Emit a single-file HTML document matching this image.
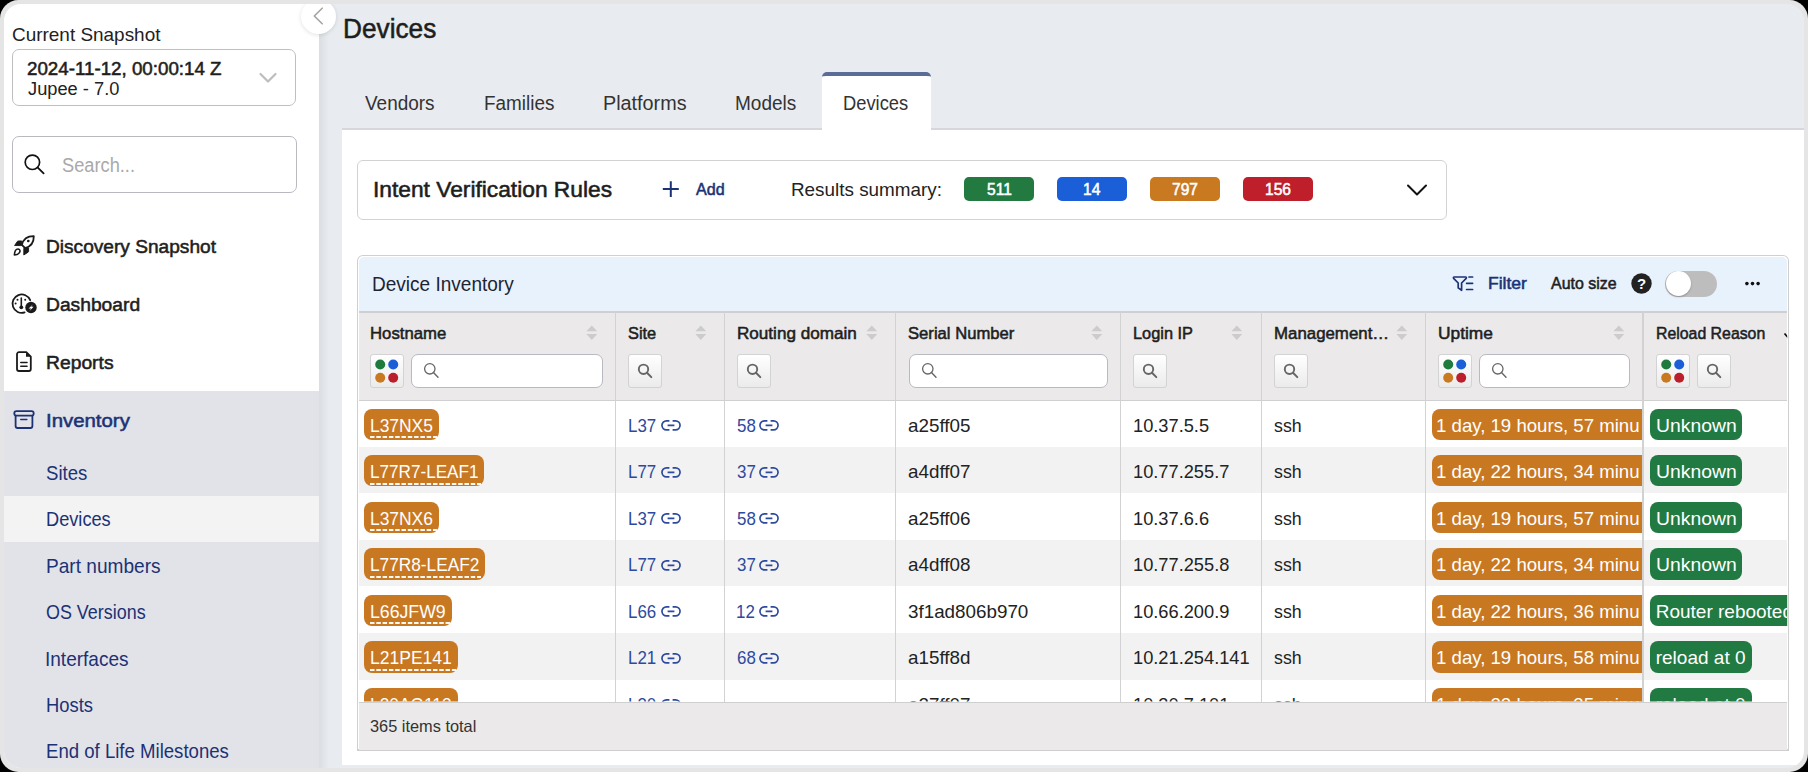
<!DOCTYPE html><html><head><meta charset="utf-8"><style>
html,body{margin:0;padding:0;background:#000;width:1808px;height:772px;overflow:hidden;font-family:"Liberation Sans",sans-serif;}
#frame{position:absolute;left:0;top:0;width:1808px;height:772px;background:#e5e5e5;border-radius:18.5px;}
#content{position:absolute;left:4px;top:4px;width:1800px;height:764px;border-radius:17px;overflow:hidden;background:#e8ecf0;}
#inner{position:absolute;left:-4px;top:-4px;width:1808px;height:772px;}
.t{position:absolute;white-space:nowrap;transform-origin:0 0;}
</style></head><body>
<div id="frame"></div><div id="content"><div id="inner">
<div style="position:absolute;left:0px;top:0px;width:319px;height:772px;background:#fff;"></div>
<div style="position:absolute;left:0px;top:391px;width:319px;height:381px;background:#e2e3e8;"></div>
<div style="position:absolute;left:0px;top:496px;width:319px;height:46px;background:#f3f3f3;"></div>
<div style="position:absolute;left:319px;top:0px;width:10px;height:772px;background:linear-gradient(to right,rgba(0,0,0,0.06),rgba(0,0,0,0));"></div>
<div style="position:absolute;left:301px;top:-1px;width:35px;height:35px;border-radius:50%;background:#fff;box-shadow:0 1px 4px rgba(0,0,0,0.12);"></div>
<svg style="position:absolute;left:301px;top:-1px;" width="35" height="35" viewBox="0 0 35 35"><path d="M21.2,9.2 L13.3,17 L21.2,24.8" fill="none" stroke="#a3a3a3" stroke-width="1.6" stroke-linecap="round" stroke-linejoin="round"/></svg>
<div class="t" style="left:11.65px;top:25.0px;font-size:19.04px;line-height:19.04px;font-weight:normal;color:#222;transform:scaleX(0.9950);">Current Snapshot</div>
<div style="position:absolute;left:11.5px;top:49px;width:284px;height:57px;box-sizing:border-box;border:1.5px solid #bfbfbf;border-radius:7px;background:#fff;"></div>
<div class="t" style="left:27.34px;top:59.0px;font-size:19.04px;line-height:19.04px;font-weight:normal;-webkit-text-stroke:0.55px #1e1e1e;color:#1e1e1e;transform:scaleX(0.9851);">2024-11-12, 00:00:14 Z</div>
<div class="t" style="left:27.54px;top:79.0px;font-size:19.19px;line-height:19.19px;font-weight:normal;color:#222;transform:scaleX(0.9516);">Jupee - 7.0</div>
<svg style="position:absolute;left:256px;top:70px;" width="24" height="16" viewBox="0 0 24 16"><path d="M4.5,4 L12,11.5 L19.5,4" fill="none" stroke="#bdbdbd" stroke-width="2.2" stroke-linecap="round" stroke-linejoin="round"/></svg>
<div style="position:absolute;left:11.5px;top:136px;width:285px;height:57px;box-sizing:border-box;border:1.5px solid #b9b9c2;border-radius:7px;background:#fff;"></div>
<svg style="position:absolute;left:16px;top:148px;" width="36" height="32" viewBox="0 0 36 32"><circle cx="16.4" cy="14.3" r="7.2" fill="none" stroke="#111" stroke-width="1.7"/><path d="M21.8,19.7 L27.6,25.4" stroke="#111" stroke-width="1.8" stroke-linecap="round"/></svg>
<div class="t" style="left:62.39px;top:156.0px;font-size:19.77px;line-height:19.77px;font-weight:normal;color:#a9a9a9;transform:scaleX(0.9224);">Search...</div>
<svg style="position:absolute;left:8px;top:230px;" width="32" height="32" viewBox="0 0 32 32"><path d="M25.8,6.2 C19.6,6.1 15.2,9.6 13.9,14.9 L17,18 C22.4,16.7 25.9,12.4 25.8,6.2 Z" fill="none" stroke="#1a1a1a" stroke-width="1.8" stroke-linejoin="round"/>
<circle cx="20.3" cy="11" r="1.35" fill="#1a1a1a"/>
<path d="M6.6,15.5 L9.3,11.5 Q9.6,11 10.3,11 L13.6,10.9 L13.4,15.6 Z" fill="#1a1a1a" stroke="#1a1a1a" stroke-width="0.9" stroke-linejoin="round"/>
<path d="M15.8,18.3 L20.6,17.7 L20.6,21.2 Q20.6,21.8 20.1,22.2 L15.8,25 Z" fill="#1a1a1a" stroke="#1a1a1a" stroke-width="0.9" stroke-linejoin="round"/>
<path d="M6.4,25 C6.6,21.4 8,19 10,19 C11.9,19 12.6,21 11.5,22.6 C10.5,24.2 8.6,24.9 6.4,25 Z" fill="none" stroke="#1a1a1a" stroke-width="1.6" stroke-linejoin="round"/></svg>
<svg style="position:absolute;left:8px;top:288px;" width="32" height="32" viewBox="0 0 32 32"><path d="M22.2,12.2 A9.2,9.2 0 1 0 16.6,24.4" fill="none" stroke="#1a1a1a" stroke-width="1.8" stroke-linecap="round"/>
<path d="M13.3,10 L13.3,18.5" stroke="#1a1a1a" stroke-width="1.6" stroke-linecap="round"/>
<circle cx="13.3" cy="19.3" r="1.9" fill="#1a1a1a"/>
<circle cx="9.5" cy="11.8" r="1" fill="#1a1a1a"/><circle cx="17.2" cy="11.8" r="1" fill="#1a1a1a"/><circle cx="7.6" cy="15.6" r="1" fill="#1a1a1a"/>
<circle cx="23" cy="19.5" r="5.7" fill="#1a1a1a"/>
<path d="M25,16.2 L20.6,20.4 L23.1,20.4 L21.3,23.2 L25.6,18.7 L23.2,18.7 Z" fill="#fff"/></svg>
<svg style="position:absolute;left:8px;top:346px;" width="32" height="32" viewBox="0 0 32 32"><path d="M11,6.2 H18.3 L22.8,10.7 V23 a2,2 0 0 1 -2,2 H11 a2,2 0 0 1 -2,-2 V8.2 a2,2 0 0 1 2,-2 Z" fill="none" stroke="#1a1a1a" stroke-width="1.8" stroke-linejoin="round"/>
<path d="M18,6.5 L18,10.8 L22.5,10.8 Z" fill="#1a1a1a"/>
<path d="M12.8,16.5 H19 M12.8,20.3 H19" stroke="#1a1a1a" stroke-width="1.6" stroke-linecap="round"/></svg>
<svg style="position:absolute;left:8px;top:404px;" width="32" height="32" viewBox="0 0 32 32"><rect x="6.3" y="7.2" width="19.4" height="4.4" rx="2.2" fill="none" stroke="#1b3275" stroke-width="1.8"/>
<path d="M7.6,11.6 V22 a2,2 0 0 0 2,2 H22.4 a2,2 0 0 0 2,-2 V11.6" fill="none" stroke="#1b3275" stroke-width="1.8"/>
<path d="M12.8,15.5 H18.8" stroke="#1b3275" stroke-width="1.6" stroke-linecap="round"/></svg>
<div class="t" style="left:45.64px;top:237.0px;font-size:19.19px;line-height:19.19px;font-weight:normal;-webkit-text-stroke:0.55px #1e1e1e;color:#1e1e1e;transform:scaleX(0.9961);">Discovery Snapshot</div>
<div class="t" style="left:45.63px;top:295.0px;font-size:19.19px;line-height:19.19px;font-weight:normal;-webkit-text-stroke:0.55px #1e1e1e;color:#1e1e1e;transform:scaleX(1.0025);">Dashboard</div>
<div class="t" style="left:45.63px;top:353.0px;font-size:19.19px;line-height:19.19px;font-weight:normal;-webkit-text-stroke:0.55px #1e1e1e;color:#1e1e1e;transform:scaleX(1.0054);">Reports</div>
<div class="t" style="left:45.54px;top:411.0px;font-size:19.19px;line-height:19.19px;font-weight:normal;-webkit-text-stroke:0.55px #1b3275;color:#1b3275;transform:scaleX(1.0621);">Inventory</div>
<div class="t" style="left:46.26px;top:464.0px;font-size:19.48px;line-height:19.48px;font-weight:normal;color:#1b3275;transform:scaleX(0.9530);">Sites</div>
<div class="t" style="left:46.27px;top:510.0px;font-size:19.48px;line-height:19.48px;font-weight:normal;color:#1b3275;transform:scaleX(0.9342);">Devices</div>
<div class="t" style="left:46.22px;top:557.0px;font-size:19.48px;line-height:19.48px;font-weight:normal;color:#1b3275;transform:scaleX(0.9803);">Part numbers</div>
<div class="t" style="left:46.33px;top:603.0px;font-size:19.48px;line-height:19.48px;font-weight:normal;color:#1b3275;transform:scaleX(0.9203);">OS Versions</div>
<div class="t" style="left:45.48px;top:650.0px;font-size:19.48px;line-height:19.48px;font-weight:normal;color:#1b3275;transform:scaleX(0.9776);">Interfaces</div>
<div class="t" style="left:46.26px;top:696.0px;font-size:19.48px;line-height:19.48px;font-weight:normal;color:#1b3275;transform:scaleX(0.9445);">Hosts</div>
<div class="t" style="left:46.25px;top:742.0px;font-size:19.48px;line-height:19.48px;font-weight:normal;color:#1b3275;transform:scaleX(0.9546);">End of Life Milestones</div>
<div class="t" style="left:343.31px;top:15.0px;font-size:27.18px;line-height:27.18px;font-weight:normal;-webkit-text-stroke:0.55px #1e1e1e;color:#1e1e1e;transform:scaleX(0.9652);">Devices</div>
<div style="position:absolute;left:822.3px;top:71.6px;width:108.4px;height:58px;background:#fff;border-radius:5px 5px 0 0;border-top:4px solid #5b6c96;box-sizing:border-box;"></div>
<div class="t" style="left:365.05px;top:94.0px;font-size:19.91px;line-height:19.91px;font-weight:normal;color:#333;transform:scaleX(0.9529);">Vendors</div>
<div class="t" style="left:483.93px;top:94.0px;font-size:19.91px;line-height:19.91px;font-weight:normal;color:#333;transform:scaleX(0.9492);">Families</div>
<div class="t" style="left:602.76px;top:94.0px;font-size:19.91px;line-height:19.91px;font-weight:normal;color:#333;transform:scaleX(0.9940);">Platforms</div>
<div class="t" style="left:735.02px;top:94.0px;font-size:19.91px;line-height:19.91px;font-weight:normal;color:#333;transform:scaleX(0.9555);">Models</div>
<div class="t" style="left:843.48px;top:94.0px;font-size:19.91px;line-height:19.91px;font-weight:normal;color:#333;transform:scaleX(0.9210);">Devices</div>
<div style="position:absolute;left:342px;top:128px;width:1466px;height:637px;background:#fff;border-top:2px solid #d5d7db;box-sizing:border-box;"></div>
<div style="position:absolute;left:822.3px;top:126px;width:108.4px;height:4px;background:#fff;"></div>
<div style="position:absolute;left:357px;top:159.5px;width:1090px;height:60px;box-sizing:border-box;border:1.5px solid #d2d2d2;border-radius:6px;background:#fff;"></div>
<div class="t" style="left:373.11px;top:179.0px;font-size:21.8px;line-height:21.8px;font-weight:normal;-webkit-text-stroke:0.55px #1e1e1e;color:#1e1e1e;transform:scaleX(1.0438);">Intent Verification Rules</div>
<svg style="position:absolute;left:660px;top:179px;" width="20" height="20" viewBox="0 0 20 20"><path d="M10.8,2.2 V18 M2.8,10.1 H18.8" stroke="#1b3275" stroke-width="2" /></svg>
<div class="t" style="left:695.66px;top:181.0px;font-size:16.42px;line-height:16.42px;font-weight:normal;-webkit-text-stroke:0.55px #1b3275;color:#1b3275;transform:scaleX(0.9788);">Add</div>
<div class="t" style="left:791.01px;top:180.0px;font-size:19.04px;line-height:19.04px;font-weight:normal;color:#222;transform:scaleX(0.9912);">Results summary:</div>
<div style="position:absolute;left:964.4px;top:177.4px;width:70px;height:23.6px;background:#227a40;border-radius:5px;"></div>
<div class="t" style="left:986.98px;top:181.0px;font-size:16.4px;line-height:16.4px;font-weight:normal;-webkit-text-stroke:0.55px #fff;color:#fff;transform:scaleX(0.9500);">511</div>
<div style="position:absolute;left:1057.4px;top:177.4px;width:70px;height:23.6px;background:#1a5fd8;border-radius:5px;"></div>
<div class="t" style="left:1083.39px;top:181.0px;font-size:16.4px;line-height:16.4px;font-weight:normal;-webkit-text-stroke:0.55px #fff;color:#fff;transform:scaleX(0.9500);">14</div>
<div style="position:absolute;left:1150.4px;top:177.4px;width:70px;height:23.6px;background:#c97920;border-radius:5px;"></div>
<div class="t" style="left:1172.20px;top:181.0px;font-size:16.4px;line-height:16.4px;font-weight:normal;-webkit-text-stroke:0.55px #fff;color:#fff;transform:scaleX(0.9500);">797</div>
<div style="position:absolute;left:1243.4px;top:177.4px;width:70px;height:23.6px;background:#be1f2b;border-radius:5px;"></div>
<div class="t" style="left:1265.11px;top:181.0px;font-size:16.4px;line-height:16.4px;font-weight:normal;-webkit-text-stroke:0.55px #fff;color:#fff;transform:scaleX(0.9500);">156</div>
<svg style="position:absolute;left:1404px;top:181px;" width="26" height="18" viewBox="0 0 26 18"><path d="M4,4.5 L13,13.5 L22,4.5" fill="none" stroke="#111" stroke-width="2" stroke-linecap="round" stroke-linejoin="round"/></svg>
<div style="position:absolute;left:357px;top:255px;width:1431.5px;height:496px;box-sizing:border-box;border:1.5px solid #cfcfcf;border-bottom-width:2px;border-radius:6px 6px 0 0;background:#fff;"></div>
<div style="position:absolute;left:358.5px;top:256.5px;width:1428.5px;height:55px;background:#e8f2fd;border-radius:5px 5px 0 0;"></div>
<div class="t" style="left:372.22px;top:275.0px;font-size:19.91px;line-height:19.91px;font-weight:normal;color:#1c2533;transform:scaleX(0.9556);">Device Inventory</div>
<svg style="position:absolute;left:1448px;top:268px;" width="32" height="32" viewBox="0 0 32 32"><path d="M6.2,9 H17.6 a0.8,0.8 0 0 1 0.6,1.3 L13.6,15 V22.3 L10.2,19.9 V15 L5.6,10.3 a0.8,0.8 0 0 1 0.6,-1.3 Z" fill="none" stroke="#1b3275" stroke-width="1.7" stroke-linejoin="round"/>
<path d="M21,9 H24.6 M18.6,15.3 H24.6 M18.6,21.5 H24.6" stroke="#1b3275" stroke-width="1.7" stroke-linecap="round"/></svg>
<div class="t" style="left:1487.74px;top:276.0px;font-size:16.86px;line-height:16.86px;font-weight:normal;-webkit-text-stroke:0.55px #1b3275;color:#1b3275;transform:scaleX(1.0394);">Filter</div>
<div class="t" style="left:1550.86px;top:276.0px;font-size:16.86px;line-height:16.86px;font-weight:normal;-webkit-text-stroke:0.55px #1e1e1e;color:#1e1e1e;transform:scaleX(0.9464);">Auto size</div>
<svg style="position:absolute;left:1631px;top:273px;" width="21" height="21" viewBox="0 0 21 21"><circle cx="10.5" cy="10.5" r="10.2" fill="#222"/><text x="10.5" y="16.2" text-anchor="middle" font-family="Liberation Sans" font-weight="bold" font-size="15" fill="#fff">?</text></svg>
<div style="position:absolute;left:1665.2px;top:270.5px;width:52.3px;height:26px;background:#bdbdbd;border-radius:13px;"></div>
<div style="position:absolute;left:1665.5px;top:271px;width:25px;height:25px;border-radius:50%;background:#fff;box-shadow:0 1px 2px rgba(0,0,0,0.25);"></div>
<svg style="position:absolute;left:1743px;top:279px;" width="20" height="9" viewBox="0 0 20 9"><circle cx="3.9" cy="4.6" r="1.8" fill="#111"/><circle cx="9.5" cy="4.6" r="1.8" fill="#111"/><circle cx="15.1" cy="4.6" r="1.8" fill="#111"/></svg>
<div style="position:absolute;left:358.5px;top:311px;width:1428.5px;height:89.8px;background:#ebe9ea;border-top:2px solid #cfcfcf;border-bottom:1.5px solid #cfcfcf;box-sizing:border-box;"></div>
<div style="position:absolute;left:358.5px;top:446.85px;width:1428.5px;height:46.55px;background:#f2f2f2;"></div>
<div style="position:absolute;left:358.5px;top:539.95px;width:1428.5px;height:46.55px;background:#f2f2f2;"></div>
<div style="position:absolute;left:358.5px;top:633.05px;width:1428.5px;height:46.55px;background:#f2f2f2;"></div>
<div style="position:absolute;left:358.5px;top:701.5px;width:1428.5px;height:48.5px;background:#ebe9ea;border-top:1.5px solid #cfcfcf;box-sizing:border-box;"></div>
<div class="t" style="left:369.94px;top:719.0px;font-size:16.72px;line-height:16.72px;font-weight:normal;color:#333;transform:scaleX(0.9790);">365 items total</div>
<div style="position:absolute;left:614.65px;top:311px;width:1.5px;height:390.5px;background:#d2d2d2;"></div>
<div style="position:absolute;left:723.75px;top:311px;width:1.5px;height:390.5px;background:#d2d2d2;"></div>
<div style="position:absolute;left:894.95px;top:311px;width:1.5px;height:390.5px;background:#d2d2d2;"></div>
<div style="position:absolute;left:1119.85px;top:311px;width:1.5px;height:390.5px;background:#d2d2d2;"></div>
<div style="position:absolute;left:1260.65px;top:311px;width:1.5px;height:390.5px;background:#d2d2d2;"></div>
<div style="position:absolute;left:1424.65px;top:311px;width:1.5px;height:390.5px;background:#d2d2d2;"></div>
<div style="position:absolute;left:1642.25px;top:311px;width:1.5px;height:390.5px;background:#d2d2d2;"></div>
<div class="t" style="left:369.99px;top:325.0px;font-size:17.01px;line-height:17.01px;font-weight:normal;-webkit-text-stroke:0.55px #1e1e1e;color:#1e1e1e;transform:scaleX(0.9838);">Hostname</div>
<svg style="position:absolute;left:585.9px;top:325px;" width="12" height="16" viewBox="0 0 12 16"><path d="M0.4,6.3 L5.8,0.4 L11.2,6.3 Z M0.4,9 L11.2,9 L5.8,15 Z" fill="#cccccc"/></svg>
<div style="position:absolute;left:370.3px;top:353.5px;width:34px;height:34px;box-sizing:border-box;border:1px solid #d3d3d3;border-radius:3px;background:linear-gradient(#ffffff,#ebebeb);"></div>
<svg style="position:absolute;left:370.3px;top:353.5px;" width="34" height="34" viewBox="0 0 34 34"><circle cx="10.2" cy="10.5" r="5" fill="#1f7a3e"/><circle cx="23.2" cy="10.5" r="5" fill="#1a5fd8"/><circle cx="10.2" cy="23.7" r="5" fill="#c97a20"/><circle cx="23.2" cy="23.7" r="5" fill="#bd1e2c"/></svg>
<div style="position:absolute;left:410.5px;top:354px;width:192px;height:33.5px;box-sizing:border-box;border:1.5px solid #b9b9c2;border-radius:7px;background:#fff;"></div>
<svg style="position:absolute;left:410.5px;top:354px;" width="30" height="34" viewBox="0 0 30 34"><circle cx="18.8" cy="14.8" r="5.2" fill="none" stroke="#666" stroke-width="1.3"/><path d="M22.5,18.6 L27,23.2" stroke="#666" stroke-width="1.4" stroke-linecap="round"/></svg>
<div class="t" style="left:628.35px;top:325.0px;font-size:17.01px;line-height:17.01px;font-weight:normal;-webkit-text-stroke:0.55px #1e1e1e;color:#1e1e1e;transform:scaleX(0.9633);">Site</div>
<svg style="position:absolute;left:694.8px;top:325px;" width="12" height="16" viewBox="0 0 12 16"><path d="M0.4,6.3 L5.8,0.4 L11.2,6.3 Z M0.4,9 L11.2,9 L5.8,15 Z" fill="#cccccc"/></svg>
<div style="position:absolute;left:628.4px;top:353.5px;width:34px;height:34px;box-sizing:border-box;border:1px solid #d3d3d3;border-radius:3px;background:linear-gradient(#ffffff,#ebebeb);"></div>
<svg style="position:absolute;left:628.4px;top:353.5px;" width="34" height="34" viewBox="0 0 34 34"><circle cx="15.5" cy="15.3" r="4.7" fill="none" stroke="#666" stroke-width="1.9"/><path d="M19,18.8 L23.3,23.1" stroke="#666" stroke-width="2" stroke-linecap="round"/></svg>
<div class="t" style="left:737.07px;top:325.0px;font-size:17.01px;line-height:17.01px;font-weight:normal;-webkit-text-stroke:0.55px #1e1e1e;color:#1e1e1e;transform:scaleX(1.0055);">Routing domain</div>
<svg style="position:absolute;left:865.8px;top:325px;" width="12" height="16" viewBox="0 0 12 16"><path d="M0.4,6.3 L5.8,0.4 L11.2,6.3 Z M0.4,9 L11.2,9 L5.8,15 Z" fill="#cccccc"/></svg>
<div style="position:absolute;left:737.2px;top:353.5px;width:34px;height:34px;box-sizing:border-box;border:1px solid #d3d3d3;border-radius:3px;background:linear-gradient(#ffffff,#ebebeb);"></div>
<svg style="position:absolute;left:737.2px;top:353.5px;" width="34" height="34" viewBox="0 0 34 34"><circle cx="15.5" cy="15.3" r="4.7" fill="none" stroke="#666" stroke-width="1.9"/><path d="M19,18.8 L23.3,23.1" stroke="#666" stroke-width="2" stroke-linecap="round"/></svg>
<div class="t" style="left:908.03px;top:325.0px;font-size:17.01px;line-height:17.01px;font-weight:normal;-webkit-text-stroke:0.55px #1e1e1e;color:#1e1e1e;transform:scaleX(0.9783);">Serial Number</div>
<svg style="position:absolute;left:1090.8px;top:325px;" width="12" height="16" viewBox="0 0 12 16"><path d="M0.4,6.3 L5.8,0.4 L11.2,6.3 Z M0.4,9 L11.2,9 L5.8,15 Z" fill="#cccccc"/></svg>
<div style="position:absolute;left:908.6px;top:354px;width:199px;height:33.5px;box-sizing:border-box;border:1.5px solid #b9b9c2;border-radius:7px;background:#fff;"></div>
<svg style="position:absolute;left:908.6px;top:354px;" width="30" height="34" viewBox="0 0 30 34"><circle cx="18.8" cy="14.8" r="5.2" fill="none" stroke="#666" stroke-width="1.3"/><path d="M22.5,18.6 L27,23.2" stroke="#666" stroke-width="1.4" stroke-linecap="round"/></svg>
<div class="t" style="left:1133.11px;top:325.0px;font-size:17.01px;line-height:17.01px;font-weight:normal;-webkit-text-stroke:0.55px #1e1e1e;color:#1e1e1e;transform:scaleX(0.9609);">Login IP</div>
<svg style="position:absolute;left:1231.3px;top:325px;" width="12" height="16" viewBox="0 0 12 16"><path d="M0.4,6.3 L5.8,0.4 L11.2,6.3 Z M0.4,9 L11.2,9 L5.8,15 Z" fill="#cccccc"/></svg>
<div style="position:absolute;left:1133.4px;top:353.5px;width:34px;height:34px;box-sizing:border-box;border:1px solid #d3d3d3;border-radius:3px;background:linear-gradient(#ffffff,#ebebeb);"></div>
<svg style="position:absolute;left:1133.4px;top:353.5px;" width="34" height="34" viewBox="0 0 34 34"><circle cx="15.5" cy="15.3" r="4.7" fill="none" stroke="#666" stroke-width="1.9"/><path d="M19,18.8 L23.3,23.1" stroke="#666" stroke-width="2" stroke-linecap="round"/></svg>
<div class="t" style="left:1273.98px;top:325.0px;font-size:17.01px;line-height:17.01px;font-weight:normal;-webkit-text-stroke:0.55px #1e1e1e;color:#1e1e1e;transform:scaleX(0.9907);">Management…</div>
<svg style="position:absolute;left:1396px;top:325px;" width="12" height="16" viewBox="0 0 12 16"><path d="M0.4,6.3 L5.8,0.4 L11.2,6.3 Z M0.4,9 L11.2,9 L5.8,15 Z" fill="#cccccc"/></svg>
<div style="position:absolute;left:1274.3px;top:353.5px;width:34px;height:34px;box-sizing:border-box;border:1px solid #d3d3d3;border-radius:3px;background:linear-gradient(#ffffff,#ebebeb);"></div>
<svg style="position:absolute;left:1274.3px;top:353.5px;" width="34" height="34" viewBox="0 0 34 34"><circle cx="15.5" cy="15.3" r="4.7" fill="none" stroke="#666" stroke-width="1.9"/><path d="M19,18.8 L23.3,23.1" stroke="#666" stroke-width="2" stroke-linecap="round"/></svg>
<div class="t" style="left:1437.66px;top:325.0px;font-size:17.01px;line-height:17.01px;font-weight:normal;-webkit-text-stroke:0.55px #1e1e1e;color:#1e1e1e;transform:scaleX(1.0195);">Uptime</div>
<svg style="position:absolute;left:1613.3px;top:325px;" width="12" height="16" viewBox="0 0 12 16"><path d="M0.4,6.3 L5.8,0.4 L11.2,6.3 Z M0.4,9 L11.2,9 L5.8,15 Z" fill="#cccccc"/></svg>
<div style="position:absolute;left:1438px;top:353.5px;width:34px;height:34px;box-sizing:border-box;border:1px solid #d3d3d3;border-radius:3px;background:linear-gradient(#ffffff,#ebebeb);"></div>
<svg style="position:absolute;left:1438px;top:353.5px;" width="34" height="34" viewBox="0 0 34 34"><circle cx="10.2" cy="10.5" r="5" fill="#1f7a3e"/><circle cx="23.2" cy="10.5" r="5" fill="#1a5fd8"/><circle cx="10.2" cy="23.7" r="5" fill="#c97a20"/><circle cx="23.2" cy="23.7" r="5" fill="#bd1e2c"/></svg>
<div style="position:absolute;left:1479px;top:354px;width:151px;height:33.5px;box-sizing:border-box;border:1.5px solid #b9b9c2;border-radius:7px;background:#fff;"></div>
<svg style="position:absolute;left:1479px;top:354px;" width="30" height="34" viewBox="0 0 30 34"><circle cx="18.8" cy="14.8" r="5.2" fill="none" stroke="#666" stroke-width="1.3"/><path d="M22.5,18.6 L27,23.2" stroke="#666" stroke-width="1.4" stroke-linecap="round"/></svg>
<div style="position:absolute;left:0;top:0;width:1808px;height:772px;clip-path:inset(0px 20.799999999999955px 0px 0px);">
<div class="t" style="left:1655.93px;top:325.0px;font-size:17.01px;line-height:17.01px;font-weight:normal;-webkit-text-stroke:0.55px #1e1e1e;color:#1e1e1e;transform:scaleX(0.9322);">Reload Reason</div>
<svg style="position:absolute;left:1783px;top:331px;" width="10" height="9" viewBox="0 0 10 9"><path d="M1.5,2.5 L5,6.5 L8.5,2.5" fill="none" stroke="#111" stroke-width="1.8"/></svg>
</div>
<div style="position:absolute;left:1655.8px;top:353.5px;width:34px;height:34px;box-sizing:border-box;border:1px solid #d3d3d3;border-radius:3px;background:linear-gradient(#ffffff,#ebebeb);"></div>
<svg style="position:absolute;left:1655.8px;top:353.5px;" width="34" height="34" viewBox="0 0 34 34"><circle cx="10.2" cy="10.5" r="5" fill="#1f7a3e"/><circle cx="23.2" cy="10.5" r="5" fill="#1a5fd8"/><circle cx="10.2" cy="23.7" r="5" fill="#c97a20"/><circle cx="23.2" cy="23.7" r="5" fill="#bd1e2c"/></svg>
<div style="position:absolute;left:1696.5px;top:353.5px;width:34px;height:34px;box-sizing:border-box;border:1px solid #d3d3d3;border-radius:3px;background:linear-gradient(#ffffff,#ebebeb);"></div>
<svg style="position:absolute;left:1696.5px;top:353.5px;" width="34" height="34" viewBox="0 0 34 34"><circle cx="15.5" cy="15.3" r="4.7" fill="none" stroke="#666" stroke-width="1.9"/><path d="M19,18.8 L23.3,23.1" stroke="#666" stroke-width="2" stroke-linecap="round"/></svg>
<div style="position:absolute;left:0;top:0;width:1808px;height:772px;clip-path:inset(400.3px 20.799999999999955px 70.5px 357px);">
<div style="position:absolute;left:364.1px;top:408.6px;width:75.1px;height:31.3px;background:#c97822;border-radius:8px;"></div>
<div class="t" style="left:369.99px;top:416.0px;font-size:19.0px;line-height:19.0px;font-weight:normal;color:#fff;transform:scaleX(0.9161);">L37NX5</div>
<div style="position:absolute;left:369.6px;top:436.20000000000005px;width:67.39999999999999px;height:2px;background-image:linear-gradient(to right,#fff 0,#fff 4.4px,transparent 4.4px);background-size:6.3px 2px;opacity:0.95;"></div>
<div class="t" style="left:627.91px;top:416.0px;font-size:19.0px;line-height:19.0px;font-weight:normal;color:#2d4a9e;transform:scaleX(0.8900);">L37</div>
<svg style="position:absolute;left:660.7469314852142px;top:419.1px;" width="22" height="14" viewBox="0 0 22 14"><path d="M8.4,1.8 H5.5 a4.55,4.55 0 0 0 0,9.1 H8.4 M11.6,1.8 H14.5 a4.55,4.55 0 0 1 0,9.1 H11.6 M6.6,6.35 H13.4" fill="none" stroke="#2d4a9e" stroke-width="1.7"/></svg>
<div class="t" style="left:736.54px;top:416.0px;font-size:19.0px;line-height:19.0px;font-weight:normal;color:#2d4a9e;transform:scaleX(0.8900);">58</div>
<svg style="position:absolute;left:759.2527629575857px;top:419.1px;" width="22" height="14" viewBox="0 0 22 14"><path d="M8.4,1.8 H5.5 a4.55,4.55 0 0 0 0,9.1 H8.4 M11.6,1.8 H14.5 a4.55,4.55 0 0 1 0,9.1 H11.6 M6.6,6.35 H13.4" fill="none" stroke="#2d4a9e" stroke-width="1.7"/></svg>
<div class="t" style="left:908.29px;top:416.0px;font-size:19.0px;line-height:19.0px;font-weight:normal;color:#222;transform:scaleX(0.9900);">a25ff05</div>
<div class="t" style="left:1133.22px;top:416.0px;font-size:19.0px;line-height:19.0px;font-weight:normal;color:#222;transform:scaleX(0.9600);">10.37.5.5</div>
<div class="t" style="left:1274.36px;top:416.0px;font-size:19.0px;line-height:19.0px;font-weight:normal;color:#222;transform:scaleX(0.9350);">ssh</div>
<div style="position:absolute;left:0;top:0;width:1808px;height:772px;clip-path:inset(0px 166px 0px 0px);">
<div style="position:absolute;left:1431.9px;top:408.6px;width:221.0999999999999px;height:31.3px;background:#c97822;border-radius:8px;"></div>
<div class="t" style="left:1436.18px;top:416.0px;font-size:19.0px;line-height:19.0px;font-weight:normal;color:#fff;transform:scaleX(0.9800);">1 day, 19 hours, 57 minu</div>
</div>
<div style="position:absolute;left:1649.7px;top:408.6px;width:92.55289259167164px;height:31.3px;background:#227a43;border-radius:8px;"></div>
<div class="t" style="left:1655.69px;top:416.0px;font-size:19.0px;line-height:19.0px;font-weight:normal;color:#fff;transform:scaleX(1.0200);">Unknown</div>
<div style="position:absolute;left:364.1px;top:455.15000000000003px;width:120.4px;height:31.3px;background:#c97822;border-radius:8px;"></div>
<div class="t" style="left:370.00px;top:462.0px;font-size:19.0px;line-height:19.0px;font-weight:normal;color:#fff;transform:scaleX(0.9008);">L77R7-LEAF1</div>
<div style="position:absolute;left:369.6px;top:482.75000000000006px;width:111.49999999999999px;height:2px;background-image:linear-gradient(to right,#fff 0,#fff 4.4px,transparent 4.4px);background-size:6.3px 2px;opacity:0.95;"></div>
<div class="t" style="left:627.91px;top:462.0px;font-size:19.0px;line-height:19.0px;font-weight:normal;color:#2d4a9e;transform:scaleX(0.8900);">L77</div>
<svg style="position:absolute;left:660.7469314852142px;top:465.65000000000003px;" width="22" height="14" viewBox="0 0 22 14"><path d="M8.4,1.8 H5.5 a4.55,4.55 0 0 0 0,9.1 H8.4 M11.6,1.8 H14.5 a4.55,4.55 0 0 1 0,9.1 H11.6 M6.6,6.35 H13.4" fill="none" stroke="#2d4a9e" stroke-width="1.7"/></svg>
<div class="t" style="left:736.56px;top:462.0px;font-size:19.0px;line-height:19.0px;font-weight:normal;color:#2d4a9e;transform:scaleX(0.8900);">37</div>
<svg style="position:absolute;left:759.2604194272074px;top:465.65000000000003px;" width="22" height="14" viewBox="0 0 22 14"><path d="M8.4,1.8 H5.5 a4.55,4.55 0 0 0 0,9.1 H8.4 M11.6,1.8 H14.5 a4.55,4.55 0 0 1 0,9.1 H11.6 M6.6,6.35 H13.4" fill="none" stroke="#2d4a9e" stroke-width="1.7"/></svg>
<div class="t" style="left:908.29px;top:462.0px;font-size:19.0px;line-height:19.0px;font-weight:normal;color:#222;transform:scaleX(0.9900);">a4dff07</div>
<div class="t" style="left:1133.22px;top:462.0px;font-size:19.0px;line-height:19.0px;font-weight:normal;color:#222;transform:scaleX(0.9600);">10.77.255.7</div>
<div class="t" style="left:1274.36px;top:462.0px;font-size:19.0px;line-height:19.0px;font-weight:normal;color:#222;transform:scaleX(0.9350);">ssh</div>
<div style="position:absolute;left:0;top:0;width:1808px;height:772px;clip-path:inset(0px 166px 0px 0px);">
<div style="position:absolute;left:1431.9px;top:455.15000000000003px;width:221.0999999999999px;height:31.3px;background:#c97822;border-radius:8px;"></div>
<div class="t" style="left:1436.18px;top:462.0px;font-size:19.0px;line-height:19.0px;font-weight:normal;color:#fff;transform:scaleX(0.9800);">1 day, 22 hours, 34 minu</div>
</div>
<div style="position:absolute;left:1649.7px;top:455.15000000000003px;width:92.55289259167164px;height:31.3px;background:#227a43;border-radius:8px;"></div>
<div class="t" style="left:1655.69px;top:462.0px;font-size:19.0px;line-height:19.0px;font-weight:normal;color:#fff;transform:scaleX(1.0200);">Unknown</div>
<div style="position:absolute;left:364.1px;top:501.70000000000005px;width:75.1px;height:31.3px;background:#c97822;border-radius:8px;"></div>
<div class="t" style="left:369.99px;top:509.0px;font-size:19.0px;line-height:19.0px;font-weight:normal;color:#fff;transform:scaleX(0.9161);">L37NX6</div>
<div style="position:absolute;left:369.6px;top:529.3000000000001px;width:67.39999999999999px;height:2px;background-image:linear-gradient(to right,#fff 0,#fff 4.4px,transparent 4.4px);background-size:6.3px 2px;opacity:0.95;"></div>
<div class="t" style="left:627.91px;top:509.0px;font-size:19.0px;line-height:19.0px;font-weight:normal;color:#2d4a9e;transform:scaleX(0.8900);">L37</div>
<svg style="position:absolute;left:660.7469314852142px;top:512.2px;" width="22" height="14" viewBox="0 0 22 14"><path d="M8.4,1.8 H5.5 a4.55,4.55 0 0 0 0,9.1 H8.4 M11.6,1.8 H14.5 a4.55,4.55 0 0 1 0,9.1 H11.6 M6.6,6.35 H13.4" fill="none" stroke="#2d4a9e" stroke-width="1.7"/></svg>
<div class="t" style="left:736.54px;top:509.0px;font-size:19.0px;line-height:19.0px;font-weight:normal;color:#2d4a9e;transform:scaleX(0.8900);">58</div>
<svg style="position:absolute;left:759.2527629575857px;top:512.2px;" width="22" height="14" viewBox="0 0 22 14"><path d="M8.4,1.8 H5.5 a4.55,4.55 0 0 0 0,9.1 H8.4 M11.6,1.8 H14.5 a4.55,4.55 0 0 1 0,9.1 H11.6 M6.6,6.35 H13.4" fill="none" stroke="#2d4a9e" stroke-width="1.7"/></svg>
<div class="t" style="left:908.29px;top:509.0px;font-size:19.0px;line-height:19.0px;font-weight:normal;color:#222;transform:scaleX(0.9900);">a25ff06</div>
<div class="t" style="left:1133.22px;top:509.0px;font-size:19.0px;line-height:19.0px;font-weight:normal;color:#222;transform:scaleX(0.9600);">10.37.6.6</div>
<div class="t" style="left:1274.36px;top:509.0px;font-size:19.0px;line-height:19.0px;font-weight:normal;color:#222;transform:scaleX(0.9350);">ssh</div>
<div style="position:absolute;left:0;top:0;width:1808px;height:772px;clip-path:inset(0px 166px 0px 0px);">
<div style="position:absolute;left:1431.9px;top:501.70000000000005px;width:221.0999999999999px;height:31.3px;background:#c97822;border-radius:8px;"></div>
<div class="t" style="left:1436.18px;top:509.0px;font-size:19.0px;line-height:19.0px;font-weight:normal;color:#fff;transform:scaleX(0.9800);">1 day, 19 hours, 57 minu</div>
</div>
<div style="position:absolute;left:1649.7px;top:501.70000000000005px;width:92.55289259167164px;height:31.3px;background:#227a43;border-radius:8px;"></div>
<div class="t" style="left:1655.69px;top:509.0px;font-size:19.0px;line-height:19.0px;font-weight:normal;color:#fff;transform:scaleX(1.0200);">Unknown</div>
<div style="position:absolute;left:364.1px;top:548.25px;width:121.0px;height:31.3px;background:#c97822;border-radius:8px;"></div>
<div class="t" style="left:370.00px;top:555.0px;font-size:19.0px;line-height:19.0px;font-weight:normal;color:#fff;transform:scaleX(0.9078);">L77R8-LEAF2</div>
<div style="position:absolute;left:369.6px;top:575.85px;width:111.49999999999999px;height:2px;background-image:linear-gradient(to right,#fff 0,#fff 4.4px,transparent 4.4px);background-size:6.3px 2px;opacity:0.95;"></div>
<div class="t" style="left:627.91px;top:555.0px;font-size:19.0px;line-height:19.0px;font-weight:normal;color:#2d4a9e;transform:scaleX(0.8900);">L77</div>
<svg style="position:absolute;left:660.7469314852142px;top:558.75px;" width="22" height="14" viewBox="0 0 22 14"><path d="M8.4,1.8 H5.5 a4.55,4.55 0 0 0 0,9.1 H8.4 M11.6,1.8 H14.5 a4.55,4.55 0 0 1 0,9.1 H11.6 M6.6,6.35 H13.4" fill="none" stroke="#2d4a9e" stroke-width="1.7"/></svg>
<div class="t" style="left:736.56px;top:555.0px;font-size:19.0px;line-height:19.0px;font-weight:normal;color:#2d4a9e;transform:scaleX(0.8900);">37</div>
<svg style="position:absolute;left:759.2604194272074px;top:558.75px;" width="22" height="14" viewBox="0 0 22 14"><path d="M8.4,1.8 H5.5 a4.55,4.55 0 0 0 0,9.1 H8.4 M11.6,1.8 H14.5 a4.55,4.55 0 0 1 0,9.1 H11.6 M6.6,6.35 H13.4" fill="none" stroke="#2d4a9e" stroke-width="1.7"/></svg>
<div class="t" style="left:908.29px;top:555.0px;font-size:19.0px;line-height:19.0px;font-weight:normal;color:#222;transform:scaleX(0.9900);">a4dff08</div>
<div class="t" style="left:1133.22px;top:555.0px;font-size:19.0px;line-height:19.0px;font-weight:normal;color:#222;transform:scaleX(0.9600);">10.77.255.8</div>
<div class="t" style="left:1274.36px;top:555.0px;font-size:19.0px;line-height:19.0px;font-weight:normal;color:#222;transform:scaleX(0.9350);">ssh</div>
<div style="position:absolute;left:0;top:0;width:1808px;height:772px;clip-path:inset(0px 166px 0px 0px);">
<div style="position:absolute;left:1431.9px;top:548.25px;width:221.0999999999999px;height:31.3px;background:#c97822;border-radius:8px;"></div>
<div class="t" style="left:1436.18px;top:555.0px;font-size:19.0px;line-height:19.0px;font-weight:normal;color:#fff;transform:scaleX(0.9800);">1 day, 22 hours, 34 minu</div>
</div>
<div style="position:absolute;left:1649.7px;top:548.25px;width:92.55289259167164px;height:31.3px;background:#227a43;border-radius:8px;"></div>
<div class="t" style="left:1655.69px;top:555.0px;font-size:19.0px;line-height:19.0px;font-weight:normal;color:#fff;transform:scaleX(1.0200);">Unknown</div>
<div style="position:absolute;left:364.1px;top:594.8px;width:87.5px;height:31.3px;background:#c97822;border-radius:8px;"></div>
<div class="t" style="left:369.97px;top:602.0px;font-size:19.0px;line-height:19.0px;font-weight:normal;color:#fff;transform:scaleX(0.9305);">L66JFW9</div>
<div style="position:absolute;left:369.6px;top:622.4px;width:79.99999999999999px;height:2px;background-image:linear-gradient(to right,#fff 0,#fff 4.4px,transparent 4.4px);background-size:6.3px 2px;opacity:0.95;"></div>
<div class="t" style="left:627.91px;top:602.0px;font-size:19.0px;line-height:19.0px;font-weight:normal;color:#2d4a9e;transform:scaleX(0.8900);">L66</div>
<svg style="position:absolute;left:660.7533850610015px;top:605.3px;" width="22" height="14" viewBox="0 0 22 14"><path d="M8.4,1.8 H5.5 a4.55,4.55 0 0 0 0,9.1 H8.4 M11.6,1.8 H14.5 a4.55,4.55 0 0 1 0,9.1 H11.6 M6.6,6.35 H13.4" fill="none" stroke="#2d4a9e" stroke-width="1.7"/></svg>
<div class="t" style="left:735.93px;top:602.0px;font-size:19.0px;line-height:19.0px;font-weight:normal;color:#2d4a9e;transform:scaleX(0.8900);">12</div>
<svg style="position:absolute;left:758.6100786347598px;top:605.3px;" width="22" height="14" viewBox="0 0 22 14"><path d="M8.4,1.8 H5.5 a4.55,4.55 0 0 0 0,9.1 H8.4 M11.6,1.8 H14.5 a4.55,4.55 0 0 1 0,9.1 H11.6 M6.6,6.35 H13.4" fill="none" stroke="#2d4a9e" stroke-width="1.7"/></svg>
<div class="t" style="left:908.27px;top:602.0px;font-size:19.0px;line-height:19.0px;font-weight:normal;color:#222;transform:scaleX(0.9900);">3f1ad806b970</div>
<div class="t" style="left:1133.22px;top:602.0px;font-size:19.0px;line-height:19.0px;font-weight:normal;color:#222;transform:scaleX(0.9600);">10.66.200.9</div>
<div class="t" style="left:1274.36px;top:602.0px;font-size:19.0px;line-height:19.0px;font-weight:normal;color:#222;transform:scaleX(0.9350);">ssh</div>
<div style="position:absolute;left:0;top:0;width:1808px;height:772px;clip-path:inset(0px 166px 0px 0px);">
<div style="position:absolute;left:1431.9px;top:594.8px;width:221.0999999999999px;height:31.3px;background:#c97822;border-radius:8px;"></div>
<div class="t" style="left:1436.18px;top:602.0px;font-size:19.0px;line-height:19.0px;font-weight:normal;color:#fff;transform:scaleX(0.9800);">1 day, 22 hours, 36 minu</div>
</div>
<div style="position:absolute;left:1649.7px;top:594.8px;width:149.00429862013044px;height:31.3px;background:#227a43;border-radius:8px;"></div>
<div class="t" style="left:1655.70px;top:602.0px;font-size:19.0px;line-height:19.0px;font-weight:normal;color:#fff;transform:scaleX(1.0000);">Router rebooted</div>
<div style="position:absolute;left:364.1px;top:641.35px;width:94.0px;height:31.3px;background:#c97822;border-radius:8px;"></div>
<div class="t" style="left:369.98px;top:648.0px;font-size:19.0px;line-height:19.0px;font-weight:normal;color:#fff;transform:scaleX(0.9218);">L21PE141</div>
<div style="position:absolute;left:369.6px;top:668.95px;width:86.3px;height:2px;background-image:linear-gradient(to right,#fff 0,#fff 4.4px,transparent 4.4px);background-size:6.3px 2px;opacity:0.95;"></div>
<div class="t" style="left:627.91px;top:648.0px;font-size:19.0px;line-height:19.0px;font-weight:normal;color:#2d4a9e;transform:scaleX(0.8900);">L21</div>
<svg style="position:absolute;left:660.801418649102px;top:651.85px;" width="22" height="14" viewBox="0 0 22 14"><path d="M8.4,1.8 H5.5 a4.55,4.55 0 0 0 0,9.1 H8.4 M11.6,1.8 H14.5 a4.55,4.55 0 0 1 0,9.1 H11.6 M6.6,6.35 H13.4" fill="none" stroke="#2d4a9e" stroke-width="1.7"/></svg>
<div class="t" style="left:736.56px;top:648.0px;font-size:19.0px;line-height:19.0px;font-weight:normal;color:#2d4a9e;transform:scaleX(0.8900);">68</div>
<svg style="position:absolute;left:759.2700704852621px;top:651.85px;" width="22" height="14" viewBox="0 0 22 14"><path d="M8.4,1.8 H5.5 a4.55,4.55 0 0 0 0,9.1 H8.4 M11.6,1.8 H14.5 a4.55,4.55 0 0 1 0,9.1 H11.6 M6.6,6.35 H13.4" fill="none" stroke="#2d4a9e" stroke-width="1.7"/></svg>
<div class="t" style="left:908.29px;top:648.0px;font-size:19.0px;line-height:19.0px;font-weight:normal;color:#222;transform:scaleX(0.9900);">a15ff8d</div>
<div class="t" style="left:1133.22px;top:648.0px;font-size:19.0px;line-height:19.0px;font-weight:normal;color:#222;transform:scaleX(0.9600);">10.21.254.141</div>
<div class="t" style="left:1274.36px;top:648.0px;font-size:19.0px;line-height:19.0px;font-weight:normal;color:#222;transform:scaleX(0.9350);">ssh</div>
<div style="position:absolute;left:0;top:0;width:1808px;height:772px;clip-path:inset(0px 166px 0px 0px);">
<div style="position:absolute;left:1431.9px;top:641.35px;width:221.0999999999999px;height:31.3px;background:#c97822;border-radius:8px;"></div>
<div class="t" style="left:1436.18px;top:648.0px;font-size:19.0px;line-height:19.0px;font-weight:normal;color:#fff;transform:scaleX(0.9800);">1 day, 19 hours, 58 minu</div>
</div>
<div style="position:absolute;left:1649.7px;top:641.35px;width:101.93625530837116px;height:31.3px;background:#227a43;border-radius:8px;"></div>
<div class="t" style="left:1655.72px;top:648.0px;font-size:19.0px;line-height:19.0px;font-weight:normal;color:#fff;transform:scaleX(1.0000);">reload at 0</div>
<div style="position:absolute;left:364.1px;top:687.9px;width:94.0px;height:31.3px;background:#c97822;border-radius:8px;"></div>
<div class="t" style="left:369.99px;top:695.0px;font-size:19.0px;line-height:19.0px;font-weight:normal;color:#fff;transform:scaleX(0.9124);">L30AG113</div>
<div style="position:absolute;left:369.6px;top:715.5px;width:86.3px;height:2px;background-image:linear-gradient(to right,#fff 0,#fff 4.4px,transparent 4.4px);background-size:6.3px 2px;opacity:0.95;"></div>
<div class="t" style="left:627.91px;top:695.0px;font-size:19.0px;line-height:19.0px;font-weight:normal;color:#2d4a9e;transform:scaleX(0.8900);">L30</div>
<svg style="position:absolute;left:660.8066762736523px;top:698.4px;" width="22" height="14" viewBox="0 0 22 14"><path d="M8.4,1.8 H5.5 a4.55,4.55 0 0 0 0,9.1 H8.4 M11.6,1.8 H14.5 a4.55,4.55 0 0 1 0,9.1 H11.6 M6.6,6.35 H13.4" fill="none" stroke="#2d4a9e" stroke-width="1.7"/></svg>
<div class="t" style="left:908.29px;top:695.0px;font-size:19.0px;line-height:19.0px;font-weight:normal;color:#222;transform:scaleX(0.9900);">a27ff07</div>
<div class="t" style="left:1133.22px;top:695.0px;font-size:19.0px;line-height:19.0px;font-weight:normal;color:#222;transform:scaleX(0.9600);">10.30.7.101</div>
<div class="t" style="left:1274.36px;top:695.0px;font-size:19.0px;line-height:19.0px;font-weight:normal;color:#222;transform:scaleX(0.9350);">ssh</div>
<div style="position:absolute;left:0;top:0;width:1808px;height:772px;clip-path:inset(0px 166px 0px 0px);">
<div style="position:absolute;left:1431.9px;top:687.9px;width:221.0999999999999px;height:31.3px;background:#c97822;border-radius:8px;"></div>
<div class="t" style="left:1436.18px;top:695.0px;font-size:19.0px;line-height:19.0px;font-weight:normal;color:#fff;transform:scaleX(0.9800);">1 day, 22 hours, 35 minu</div>
</div>
<div style="position:absolute;left:1649.7px;top:687.9px;width:101.93625530837116px;height:31.3px;background:#227a43;border-radius:8px;"></div>
<div class="t" style="left:1655.72px;top:695.0px;font-size:19.0px;line-height:19.0px;font-weight:normal;color:#fff;transform:scaleX(1.0000);">reload at 0</div>
</div>
</div></div></body></html>
